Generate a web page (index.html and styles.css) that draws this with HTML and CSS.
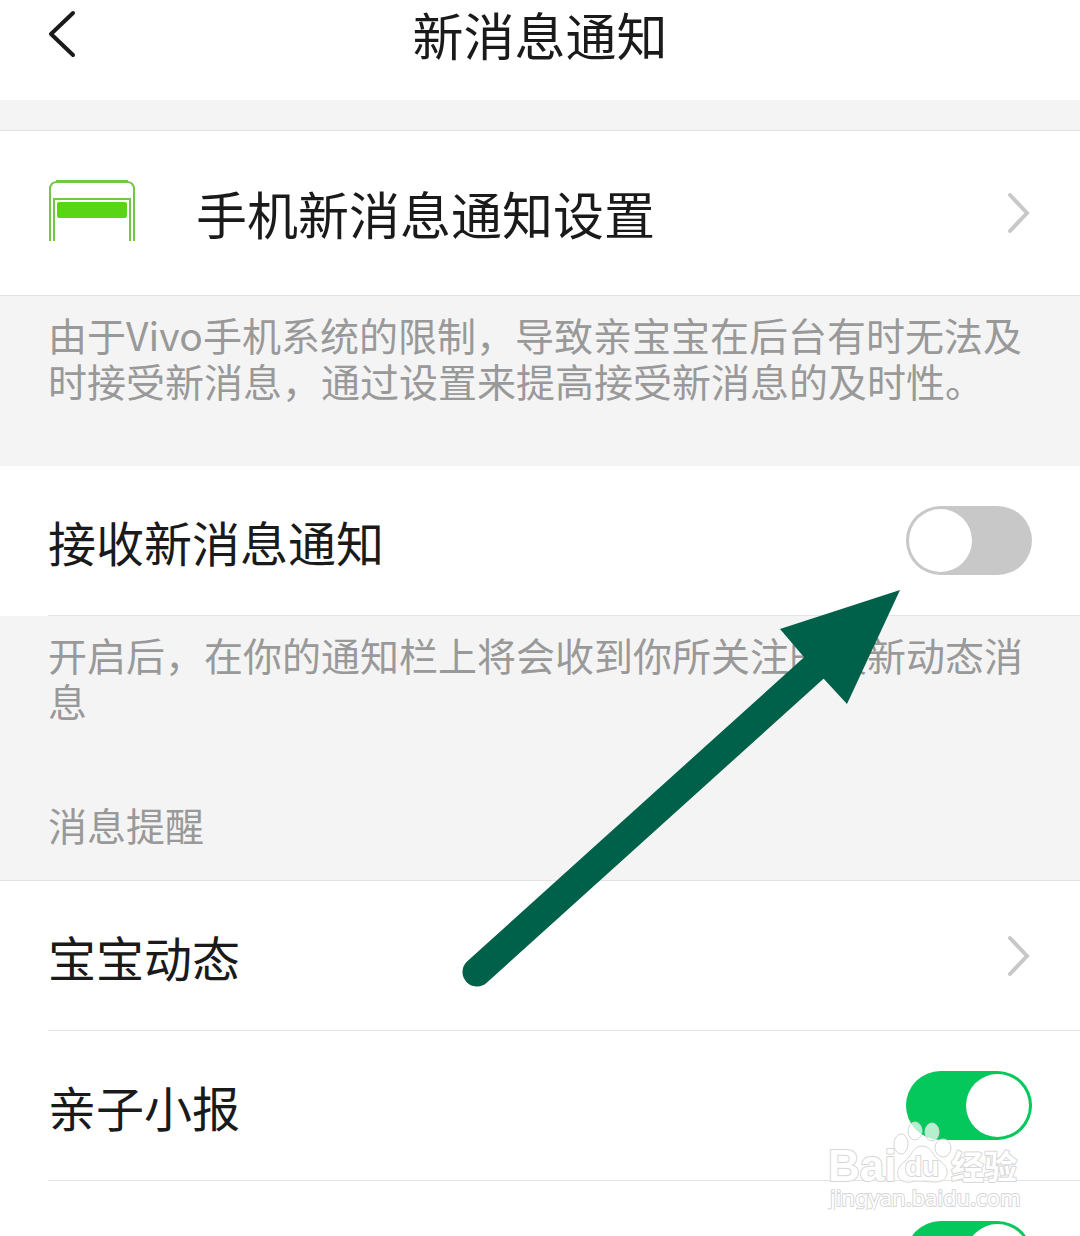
FILE: index.html
```html
<!DOCTYPE html>
<html lang="zh-CN">
<head>
    <meta charset="UTF-8">
    <meta name="viewport" content="width=device-width, initial-scale=1.0">
    <title>新消息通知</title>
    <link rel="stylesheet" href="styles.css">
</head>
<body>
    <div class="screen">
        <header class="header">
            <button class="back" type="button" aria-label="返回">
                <svg width="28" height="48" viewBox="0 0 28 48">
                    <path d="M25 3 L3 24 L25 45" fill="none" stroke="#1a1a1a" stroke-width="4" stroke-linecap="round" stroke-linejoin="round"/>
                </svg>
            </button>
            <h1 class="title">新消息通知</h1>
        </header>

        <main>
            <a class="row row-phone" href="#">
                <svg class="phone-icon" width="88" height="66" viewBox="0 0 88 66">
                    <path d="M2 61 V8 Q3 2 9 2 H79 Q85 2 86 8 V61" fill="none" stroke="#74c745" stroke-width="2"/>
                    <path d="M8 1.5 H80" stroke="#74c745" stroke-width="3"/>
                    <path d="M6 61 V19 H82 V61" fill="none" stroke="#74c745" stroke-width="2"/>
                    <rect x="9" y="22" width="70" height="16" rx="2" fill="#58d616"/>
                </svg>
                <span class="label label-large">手机新消息通知设置</span>
                <svg class="chevron" width="24" height="42" viewBox="0 0 24 42">
                    <path d="M2 3 L19 21 L2 39" fill="none" stroke="#c8c8c8" stroke-width="4" stroke-linecap="round"/>
                </svg>
            </a>

            <p class="hint">由于Vivo手机系统的限制，导致亲宝宝在后台有时无法及时接受新消息，通过设置来提高接受新消息的及时性。</p>

            <div class="row">
                <label class="label" for="receive">接收新消息通知</label>
                <input class="switch" type="checkbox" id="receive">
            </div>

            <p class="hint">开启后，在你的通知栏上将会收到你所关注的最新动态消息</p>
            <h2 class="section-title">消息提醒</h2>

            <a class="row" href="#">
                <span class="label">宝宝动态</span>
                <svg class="chevron" width="24" height="42" viewBox="0 0 24 42">
                    <path d="M2 3 L19 21 L2 39" fill="none" stroke="#c8c8c8" stroke-width="4" stroke-linecap="round"/>
                </svg>
            </a>
            <div class="row">
                <label class="label" for="report">亲子小报</label>
                <input class="switch" type="checkbox" id="report" checked>
            </div>
            <div class="row">
                <label class="label" for="system">系统通知</label>
                <input class="switch" type="checkbox" id="system" checked>
            </div>
        </main>

        <!-- Arrow pointing at the switch -->
        <svg class="arrow" width="440" height="400" viewBox="0 0 440 400">
            <path d="M17 383 L356 77" stroke="#00614a" stroke-width="29" stroke-linecap="round"/>
            <path d="M440 1 L320 40 L343 67 L363 89 L387 115 Z" fill="#00614a"/>
        </svg>

        <svg class="watermark" width="200" height="100" viewBox="0 0 200 100">
            <g fill="#fff" fill-opacity="0.7" stroke="#d6d6d6" stroke-width="1">
                <ellipse cx="75" cy="34" rx="7" ry="10"/>
                <ellipse cx="89" cy="21" rx="7" ry="9"/>
                <ellipse cx="106" cy="22" rx="7" ry="9"/>
                <ellipse cx="117" cy="38" rx="8" ry="9"/>
                <path d="M96 36 C105 36 107 46 114 51 C125 58 123 72 110 72 C102 72 92 70 84 72 C71 74 67 60 78 52 C86 46 87 36 96 36 Z"/>
            </g>
            <g class="wm-text">
                <text class="wm-logo" x="2" y="71">Bai</text>
                <text class="wm-du" x="79" y="66">du</text>
                <text class="wm-cn" x="125" y="69">经验</text>
                <text class="wm-url" x="4" y="96">jingyan.baidu.com</text>
            </g>
        </svg>
    </div>
</body>
</html>
```
FILE: styles.css
```css
* {
    box-sizing: border-box;
}

body {
    margin: 0;
    font-family: "Noto Sans CJK SC", sans-serif;
    color: #1a1a1a;
    background-color: #f4f4f4;
}

.screen {
    position: relative;
    height: 100vh;
    overflow: hidden;
}

.header {
    display: grid;
    grid-template-columns: 80px 1fr 80px;
    align-items: center;
    padding: 0 0 32px;
    margin-bottom: 30px;
    background-color: #fff;
}

.back {
    padding: 0 0 0 48px;
    border: none;
    background: none;
    cursor: pointer;
}

.back svg {
    display: block;
}

.title {
    margin: 0;
    font-size: 51px;
    font-weight: 400;
    line-height: 68px;
    text-align: center;
}

.row {
    display: flex;
    align-items: center;
    min-height: 150px;
    padding: 0 48px 1px;
    background: linear-gradient(#e4e4e4, #e4e4e4) 48px 100% / 100% 1px no-repeat #fff;
    color: inherit;
    text-decoration: none;
}

.row-phone {
    min-height: 166px;
    padding-bottom: 0;
    border-top: 1px solid #e2e2e2;
    border-bottom: 1px solid #e2e2e2;
    background: #fff;
}

.phone-icon {
    margin-right: 60px;
}

.label {
    flex: 1;
    font-size: 48px;
    line-height: 70px;
}

.label-large {
    font-size: 51px;
}

.hint {
    margin: 0;
    padding: 15px 48px 63px;
    color: #999;
    font-size: 39px;
    line-height: 46px;
}

.section-title {
    margin: 0;
    padding: 15px 48px 33px;
    border-bottom: 1px solid #e2e2e2;
    color: #999;
    font-size: 39px;
    font-weight: 400;
    line-height: 46px;
}

.switch {
    appearance: none;
    width: 126px;
    height: 69px;
    margin: 0;
    padding: 3px;
    border-radius: 35px;
    background-color: #c8c8c8;
    cursor: pointer;
}

.switch::before {
    content: "";
    display: block;
    width: 63px;
    height: 63px;
    border-radius: 50%;
    background-color: #fff;
}

.switch:checked {
    background-color: #04c85b;
}

.switch:checked::before {
    margin-left: auto;
}

.arrow {
    position: absolute;
    top: 589px;
    left: 460px;
    pointer-events: none;
}

.watermark {
    position: absolute;
    right: 54px;
    bottom: 26px;
    pointer-events: none;
}

.wm-text {
    fill: #fff;
    stroke: #d6d6d6;
    stroke-width: 2px;
    stroke-linejoin: round;
    paint-order: stroke;
}

.wm-logo {
    font: bold 44px "Liberation Sans", sans-serif;
}

.wm-du {
    font: bold 28px "Liberation Sans", sans-serif;
}

.wm-cn {
    font: bold 33px "Noto Sans CJK SC", sans-serif;
}

.wm-url {
    font: 22px "Noto Sans", sans-serif;
}
```
